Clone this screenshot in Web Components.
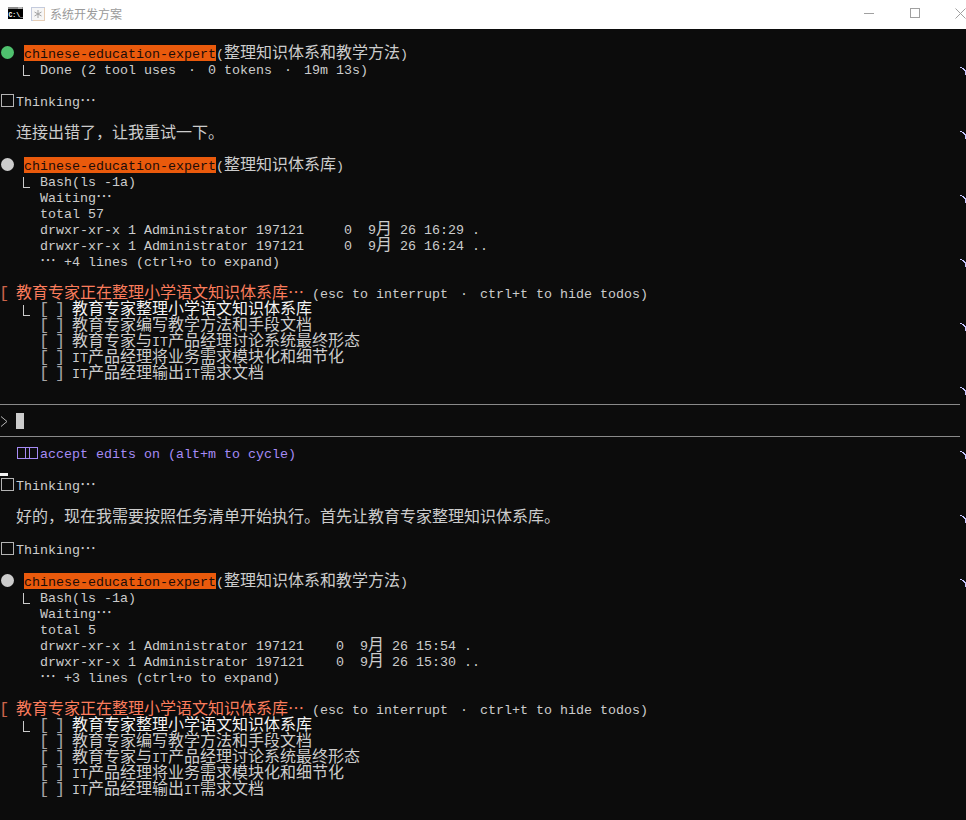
<!DOCTYPE html>
<html lang="zh">
<head>
<meta charset="utf-8">
<title>系统开发方案</title>
<style>
html,body{margin:0;padding:0;background:#0c0c0c;}
</style>
</head>
<body>
<app-window>
<title-bar slot="bar" caption="系统开发方案"></title-bar>
<term-screen>
<term-row></term-row>
<term-row><agent-dot tone="green"></agent-dot><hl-text>chinese-education-expert</hl-text>(<z-h>整理知识体系和教学方法</z-h>)</term-row>
<term-row mark>   <corner-mark></corner-mark> Done (2 tool uses <wide-dot>·</wide-dot> 0 tokens <wide-dot>·</wide-dot> 19m 13s)</term-row>
<term-row></term-row>
<term-row><tofu-box></tofu-box>Thinking<z-h>…</z-h></term-row>
<term-row></term-row>
<term-row mark>  <z-h>连接出错了&#xFF0C;让我重试一下。</z-h></term-row>
<term-row></term-row>
<term-row><agent-dot></agent-dot><hl-text>chinese-education-expert</hl-text>(<z-h>整理知识体系库</z-h>)</term-row>
<term-row>   <corner-mark></corner-mark> Bash(ls -1a)</term-row>
<term-row mark>     Waiting<z-h>…</z-h></term-row>
<term-row>     total 57</term-row>
<term-row>     drwxr-xr-x 1 Administrator 197121     0  9<z-h>月</z-h> 26 16:29 .</term-row>
<term-row>     drwxr-xr-x 1 Administrator 197121     0  9<z-h>月</z-h> 26 16:24 ..</term-row>
<term-row mark>     <z-h>…</z-h> +4 lines (ctrl+o to expand)</term-row>
<term-row></term-row>
<term-row><span style="color:#fb7c5c"><br-k>[</br-k> <z-h>教育专家正在整理小学语文知识体系库…</z-h></span> (esc to interrupt <wide-dot>·</wide-dot> ctrl+t to hide todos)</term-row>
<term-row>   <corner-mark></corner-mark> <br-k>[</br-k> <br-k>]</br-k> <z-h bright>教育专家整理小学语文知识体系库</z-h></term-row>
<term-row mark>     <br-k>[</br-k> <br-k>]</br-k> <z-h>教育专家编写教学方法和手段文档</z-h></term-row>
<term-row>     <br-k>[</br-k> <br-k>]</br-k> <z-h>教育专家与</z-h>IT<z-h>产品经理讨论系统最终形态</z-h></term-row>
<term-row>     <br-k>[</br-k> <br-k>]</br-k> IT<z-h>产品经理将业务需求模块化和细节化</z-h></term-row>
<term-row>     <br-k>[</br-k> <br-k>]</br-k> IT<z-h>产品经理输出</z-h>IT<z-h>需求文档</z-h></term-row>
<term-row mark></term-row>
<term-row rule></term-row>
<term-row><prompt-caret></prompt-caret></term-row>
<term-row rule></term-row>
<term-row mark tone="purple">  <tofu-box wide></tofu-box>accept edits on (alt+m to cycle)</term-row>
<term-row><stray-bar></stray-bar></term-row>
<term-row><tofu-box></tofu-box>Thinking<z-h>…</z-h></term-row>
<term-row></term-row>
<term-row mark>  <z-h>好的&#xFF0C;现在我需要按照任务清单开始执行。首先让教育专家整理知识体系库。</z-h></term-row>
<term-row></term-row>
<term-row><tofu-box></tofu-box>Thinking<z-h>…</z-h></term-row>
<term-row></term-row>
<term-row mark><agent-dot></agent-dot><hl-text>chinese-education-expert</hl-text>(<z-h>整理知识体系和教学方法</z-h>)</term-row>
<term-row>   <corner-mark></corner-mark> Bash(ls -1a)</term-row>
<term-row>     Waiting<z-h>…</z-h></term-row>
<term-row>     total 5</term-row>
<term-row>     drwxr-xr-x 1 Administrator 197121    0  9<z-h>月</z-h> 26 15:54 .</term-row>
<term-row>     drwxr-xr-x 1 Administrator 197121    0  9<z-h>月</z-h> 26 15:30 ..</term-row>
<term-row>     <z-h>…</z-h> +3 lines (ctrl+o to expand)</term-row>
<term-row></term-row>
<term-row><span style="color:#fb7c5c"><br-k>[</br-k> <z-h>教育专家正在整理小学语文知识体系库…</z-h></span> (esc to interrupt <wide-dot>·</wide-dot> ctrl+t to hide todos)</term-row>
<term-row>   <corner-mark></corner-mark> <br-k>[</br-k> <br-k>]</br-k> <z-h bright>教育专家整理小学语文知识体系库</z-h></term-row>
<term-row>     <br-k>[</br-k> <br-k>]</br-k> <z-h>教育专家编写教学方法和手段文档</z-h></term-row>
<term-row>     <br-k>[</br-k> <br-k>]</br-k> <z-h>教育专家与</z-h>IT<z-h>产品经理讨论系统最终形态</z-h></term-row>
<term-row>     <br-k>[</br-k> <br-k>]</br-k> IT<z-h>产品经理将业务需求模块化和细节化</z-h></term-row>
<term-row>     <br-k>[</br-k> <br-k>]</br-k> IT<z-h>产品经理输出</z-h>IT<z-h>需求文档</z-h></term-row>
<term-row></term-row>
<term-row></term-row>
</term-screen>
</app-window>
<script>
function def(name, css, html){
  customElements.define(name, class extends HTMLElement{
    constructor(){
      super();
      const root=this.attachShadow({mode:'open'});
      root.innerHTML='<style>'+css+'</style>'+html;
    }
  });
}
def('app-window',
 ':host{display:flex;flex-direction:column;width:966px;height:820px;overflow:hidden;background:#0c0c0c;}',
 '<slot name="bar"></slot><slot></slot>');

customElements.define('title-bar', class extends HTMLElement{
  connectedCallback(){
    if(this.shadowRoot) return;
    const r=this.attachShadow({mode:'open'});
    r.innerHTML=`<style>
    :host{display:flex;align-items:flex-start;height:29px;flex:none;background:#fff;color:#9a9a9a;font:12px "Noto Sans CJK SC","Liberation Sans",sans-serif;}
    .cmd{margin:7px 0 0 8px;display:block}
    .app{margin:7px 0 0 8px;display:block}
    .cap{margin-left:5px;line-height:27px}
    .ctl{margin-left:auto;margin-right:-17px;display:flex}
    .btn{width:45.5px;height:26px;display:flex;align-items:center;justify-content:center}
    svg{display:block}
    </style>
    <svg class="cmd" width="15" height="12" viewBox="0 0 15 12"><rect width="15" height="12" fill="#000"/><rect width="15" height="2" fill="#8c8c8c"/><rect x="10" y="0.5" width="4" height="1" fill="#ddd"/><text x="0.5" y="9.5" font-family="Liberation Mono" font-weight="700" font-size="6.4" fill="#fff">C:\\_</text></svg>
    <svg class="app" width="14" height="14" viewBox="0 0 14 14"><rect x=".5" y=".5" width="13" height="13" fill="#f6f6f6" stroke="#c4cbdd"/><path d="M13.5 1v12.5H2" fill="none" stroke="#e6cdb4"/><path d="M7 3v8M3.5 5l7 4M10.5 5l-7 4" stroke="#a2a2a2" fill="none"/></svg>
    <span class="cap"></span>
    <div class="ctl">
      <div class="btn"><svg width="10" height="10" viewBox="0 0 10 10"><path d="M0 5.5h10" stroke="#a0a0a0"/></svg></div>
      <div class="btn"><svg width="10" height="10" viewBox="0 0 10 10"><rect x=".5" y=".5" width="9" height="9" fill="none" stroke="#a0a0a0"/></svg></div>
      <div class="btn"><svg width="11" height="11" viewBox="0 0 11 11"><path d="M.5.5l10 10M10.5.5l-10 10" fill="none" stroke="#a0a0a0"/></svg></div>
    </div>`;
    r.querySelector('.cap').textContent=this.getAttribute('caption');
  }
});

def('term-screen',
 ':host{display:block;flex:1;min-height:0;overflow:hidden;background:#0c0c0c;color:#cccccc;font:13.33px/16px "Liberation Mono",monospace;}',
 '<slot></slot>');

def('term-row',
 `:host{display:flex;justify-content:space-between;height:16px;white-space:pre;position:relative}
  :host([tone=purple]) {color:#a68bf5}
  .t{display:block;height:16px;line-height:20px;flex:1;min-width:0}
  .m{display:none;flex:none;width:6px;height:8px;margin-top:6px}
  :host([mark]) .m{display:block}
  .r{display:none;position:absolute;left:0;right:6px;top:7px;height:1px;background:#8a8a8a}
  :host([rule]) .r{display:block}`,
 '<span class="t"><slot></slot></span><svg class="m" viewBox="0 0 6 8" shape-rendering="crispEdges"><path d="M0 0h2v1H0zM2 1h2v1H2zM3 2h2v1H3zM4 3h1v1H4zM5 3h1v5H5z" fill="#c6c6ff"/></svg><span class="r"></span>');

def('z-h',
 ':host{display:inline;font:16px/0 "Noto Sans CJK SC",sans-serif;font-weight:400}:host([bright]){color:#f4f4f4}',
 '<slot></slot>');

def('wide-dot',
 ':host{display:inline-block;width:16px;height:16px;vertical-align:top;text-align:center}',
 '<slot></slot>');

def('br-k',
 ':host{display:inline-block;width:8px;height:16px;vertical-align:top;overflow:visible;font:17px/18px "Liberation Mono",monospace;text-align:center;text-indent:-1px;opacity:.8}',
 '<slot></slot>');

def('hl-text',
 ':host{display:inline-block;height:16px;vertical-align:top;background:#ea5a0c;color:#1c0c08}',
 '<slot></slot>');

def('agent-dot',
 `:host{display:inline-block;width:24px;height:16px;vertical-align:top;color:#cccccc}
  :host([tone=green]){color:#4fc16e}
  svg{display:block}`,
 '<svg width="16" height="16" viewBox="0 0 16 16"><circle cx="7.5" cy="7.5" r="6.5" fill="currentColor"/></svg>');

def('corner-mark',
 `:host{display:inline-block;width:8px;height:16px;vertical-align:top;position:relative;left:-1px}
  svg{display:block}`,
 '<svg width="8" height="16" viewBox="0 0 8 16" shape-rendering="crispEdges"><path d="M0 4h1v11H0zM0 14h7v1H0z" fill="#cccccc"/></svg>');

def('tofu-box',
 `:host{display:inline-block;width:16px;height:16px;vertical-align:top}
  :host([wide]){width:24px}
  svg{display:block}
  .b{display:none}
  :host([wide]) .a{display:none}
  :host([wide]) .b{display:block}`,
 '<svg class="a" width="16" height="16" viewBox="0 0 16 16" shape-rendering="crispEdges"><rect x="1.5" y="1.5" width="12" height="12" fill="none" stroke="#b4b4b4"/></svg><svg class="b" width="24" height="16" viewBox="0 0 24 16" shape-rendering="crispEdges"><path d="M1.5 2.5h20v11h-20zM9.5 2.5v11M13.5 2.5v11" fill="none" stroke="#a68bf5"/></svg>');

def('prompt-caret',
 `:host{display:block;height:16px;position:relative}
  svg{display:block;position:absolute;left:0;top:3px}
  i{display:block;position:absolute;left:16px;top:0;width:8px;height:16px;background:#cccccc}`,
 '<svg width="8" height="11" viewBox="0 0 8 11"><path d="M1 .5l6 5-6 5" fill="none" stroke="#b4b4b4"/></svg><i></i>');

def('stray-bar',
 ':host{display:block;width:8px;height:3px;margin-top:12px;background:#f2f2f2}',
 '');
</script>
</body>
</html>
